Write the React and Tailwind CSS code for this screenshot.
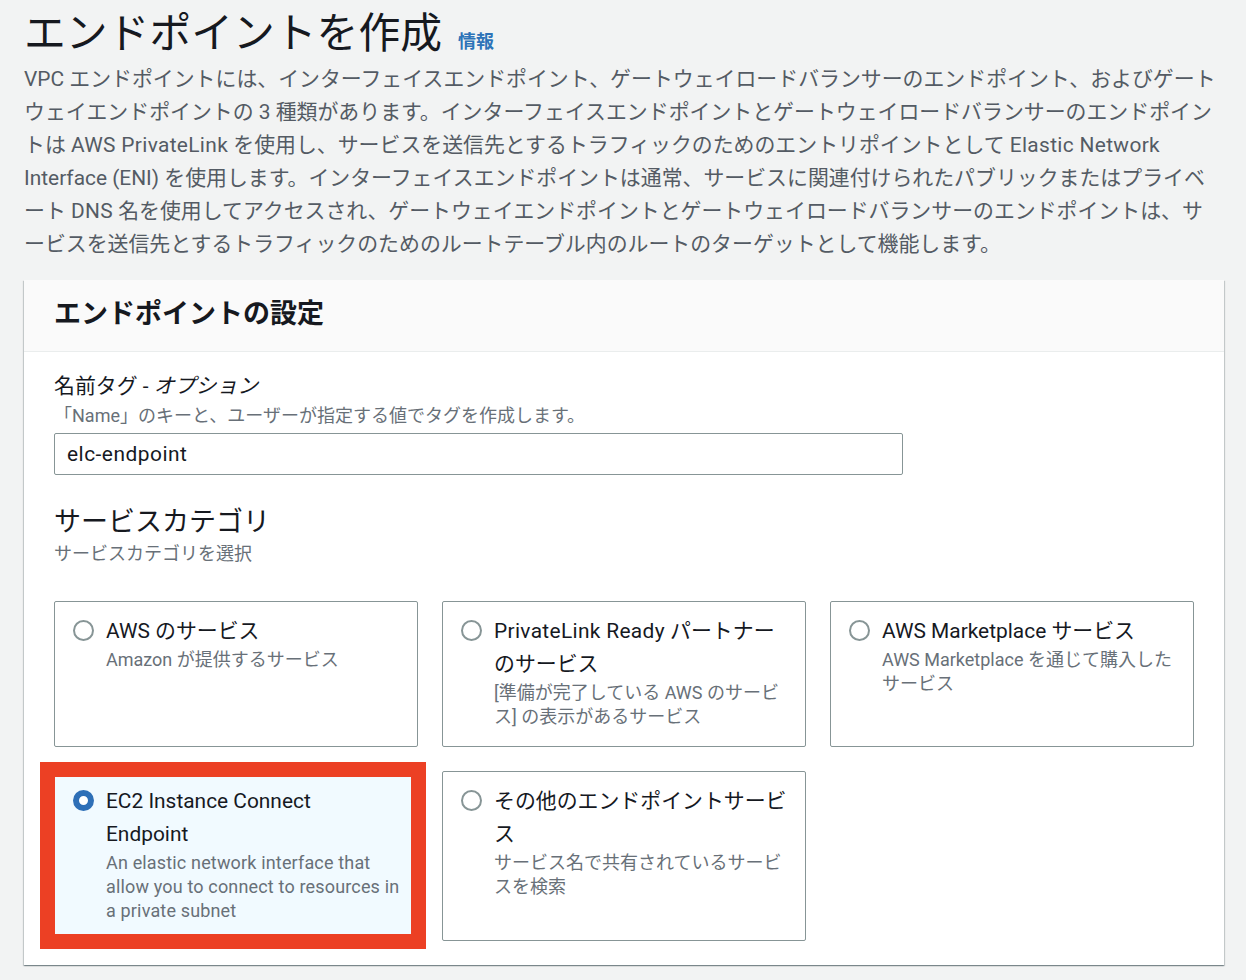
const FONT = { fontFamily: 'Roboto, "Noto Sans CJK JP", sans-serif' };

// Roboto runs a little narrow against the screenshot's latin text
function L({ children }) {
  return <span className="tracking-[0.016em]">{children}</span>;
}

const intro = [
  <>VPC エンドポイントには、インターフェイスエンドポイント、ゲートウェイロードバランサーのエンドポイント、およびゲート</>,
  <>ウェイエンドポイントの 3 種類があります。インターフェイスエンドポイントとゲートウェイロードバランサーのエンドポイン</>,
  <>トは <L>AWS PrivateLink</L> を使用し、サービスを送信先とするトラフィックのためのエントリポイントとして <L>Elastic Network</L></>,
  <>Interface (ENI) を使用します。インターフェイスエンドポイントは通常、サービスに関連付けられたパブリックまたはプライベ</>,
  <>ート <L>DNS</L> 名を使用してアクセスされ、ゲートウェイエンドポイントとゲートウェイロードバランサーのエンドポイントは、サ</>,
  <>ービスを送信先とするトラフィックのためのルートテーブル内のルートのターゲットとして機能します。</>,
];

function Radio({ checked }) {
  if (checked) {
    return <span className="mt-[5px] block h-[21px] w-[21px] shrink-0 rounded-full border-[6px] border-[#2e6fb7] bg-white" />;
  }
  return <span className="mt-[5px] block h-[21px] w-[21px] shrink-0 rounded-full border-2 border-[#879596] bg-white" />;
}

function Tile({ title, desc, checked, className = '' }) {
  return (
    <div className={`flex gap-[12px] rounded-[2px] border px-[18px] pt-[13px] ${checked ? 'border-[#f1faff] bg-[#f1faff]' : 'border-[#879596] bg-white'} ${className}`}>
      <Radio checked={checked} />
      <div className="min-w-0">
        <div className="text-[20.9px] leading-[33px] text-[#16191f]">{title}</div>
        <div className="text-[18px] leading-[24px] text-[#687078]">{desc}</div>
      </div>
    </div>
  );
}

export default function App() {
  return (
    <div className="h-[980px] overflow-hidden bg-[#f2f3f3] px-[24px] pt-[8px]" style={FONT}>
      <div className="flex items-baseline gap-[16px]">
        <h1 className="text-[41.8px] leading-[52px] font-normal text-[#16191f]">エンドポイントを作成</h1>
        <a className="text-[18px] font-bold text-[#2e73b8]">情報</a>
      </div>
      <div className="mt-[3px] whitespace-nowrap text-[20.9px] leading-[33px] text-[#545b64]">
        {intro.map((line, i) => (
          <div key={i}>{line}</div>
        ))}
      </div>

      <section className="mt-[19px] h-[685px] w-[1200px] bg-white shadow-[0_1px_1px_0_rgba(0,28,36,0.3),1px_1px_1px_0_rgba(0,28,36,0.15),-1px_1px_1px_0_rgba(0,28,36,0.15)]">
        <div className="h-[72px] border-b border-[#eaeded] bg-[#fafafa] px-[30px] pt-[15px]">
          <h2 className="text-[27px] leading-[38px] font-bold text-[#16191f]">エンドポイントの設定</h2>
        </div>
        <div className="px-[30px] pt-[18px]">
          <div className="text-[20.9px] leading-[33px] text-[#16191f]">
            名前タグ - <i>オプション</i>
          </div>
          <div className="mt-[1px] text-[18px] leading-[24px] text-[#687078]">「Name」のキーと、ユーザーが指定する値でタグを作成します。</div>
          <div className="mt-[5px] flex h-[42px] w-[849px] items-center rounded-[2px] border border-[#879596] bg-white px-[12px] pt-[2px] text-[20.9px] tracking-[0.5px] text-[#16191f]">
            elc-endpoint
          </div>
          <h3 className="mt-[26px] text-[27px] leading-[42px] font-normal text-[#16191f]">サービスカテゴリ</h3>
          <div className="-mt-[1px] text-[18px] leading-[24px] text-[#687078]">サービスカテゴリを選択</div>

          <div className="mt-[35px] grid w-[1140px] grid-cols-[364px_364px_364px] grid-rows-[146px_170px] gap-[24px]">
            <Tile title="AWS のサービス" desc="Amazon が提供するサービス" />
            <Tile title={<><L>PrivateLink Ready</L> パートナーのサービス</>} desc="[準備が完了している AWS のサービス] の表示があるサービス" />
            <Tile title={<>AWS Marketplace サービス</>} desc="AWS Marketplace を通じて購入したサービス" />
            <div className="relative">
              <Tile
                checked
                className="h-full"
                title={<>EC2 Instance Connect<br />Endpoint</>}
                desc={
                  <span className="whitespace-nowrap tracking-[0.16px]">
                    An elastic network interface that<br />allow you to connect to resources in<br />a private subnet
                  </span>
                }
              />
              {/* red annotation drawn over the selected tile */}
              <div className="pointer-events-none absolute -top-[9px] -right-[8px] -bottom-[8px] -left-[14px] border-[15px] border-[#ec4024]" />
            </div>
            <Tile title="その他のエンドポイントサービス" desc="サービス名で共有されているサービスを検索" />
          </div>
        </div>
      </section>
    </div>
  );
}
